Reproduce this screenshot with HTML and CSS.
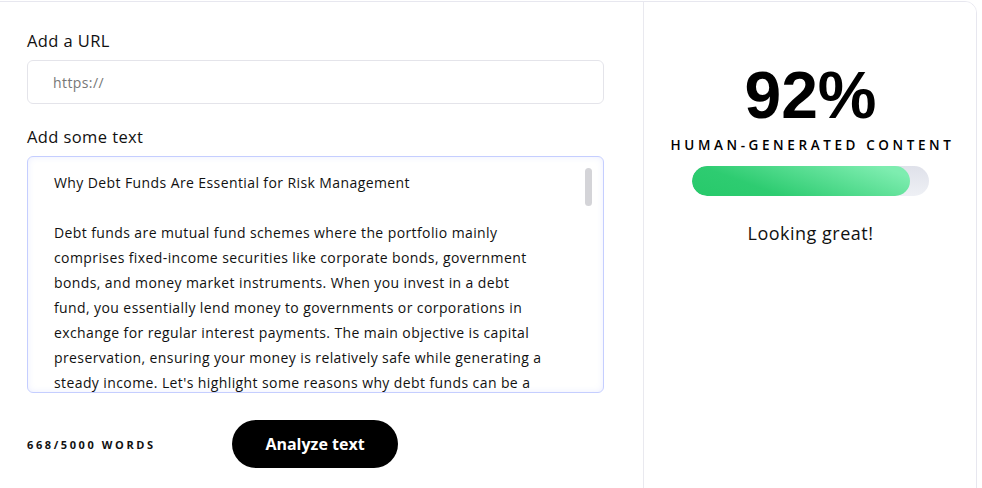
FILE: index.html
```html
<!DOCTYPE html>
<html lang="en">

<head>
	<meta charset="UTF-8" />
	<meta name="viewport" content="width=device-width, initial-scale=1.0" />
	<title>AI Content Detector</title>
	<link rel="stylesheet" href="styles.css">
</head>

<body>
	<div class="card">
		<div class="editor">
			<label class="label">Add a URL</label>
			<div class="url-box">https://</div>

			<label class="label label-text">Add some text</label>
			<div class="text-box">
				<div class="text-body">
					<p>Why Debt Funds Are Essential for Risk Management</p>
					<p>Debt funds are mutual fund schemes where the portfolio mainly<br>
						comprises fixed-income securities like corporate bonds, government<br>
						bonds, and money market instruments. When you invest in a debt<br>
						fund, you essentially lend money to governments or corporations in<br>
						exchange for regular interest payments. The main objective is capital<br>
						preservation, ensuring your money is relatively safe while generating a<br>
						steady income. Let's highlight some reasons why debt funds can be a</p>
				</div>
				<span class="thumb"></span>
			</div>

			<div class="actions">
				<span class="count">668/5000 words</span>
				<button class="analyze">Analyze text</button>
			</div>
		</div>

		<div class="result">
			<div class="score">92%</div>
			<div class="score-label">Human-generated content</div>
			<div class="bar">
				<div class="bar-fill" style="width: 92%"></div>
			</div>
			<div class="verdict">Looking great!</div>
		</div>
	</div>
</body>

</html>
```

FILE: styles.css
```css
* {
	padding: 0px;
	margin: 0px;
	box-sizing: border-box;
}

body {
	font-family: "Open Sans", "Liberation Sans", sans-serif;
	color: #111;
	background: #fff;
}

.card {
	display: grid;
	grid-template-columns: 662px 334px;
	width: 997px;
	height: 520px;
	margin: 1px 0 0 -20px;
	border: 1px solid #e7e7ef;
	border-radius: 12px;
	overflow: hidden;
}

.editor {
	padding: 27px 39px 0 46px;
	display: flex;
	flex-direction: column;
}

.label {
	font-size: 16.5px;
	font-weight: 500;
	letter-spacing: 0.4px;
	line-height: 24px;
	color: #111;
}

.label-text {
	margin-top: 21px;
}

.url-box {
	margin-top: 7px;
	height: 44px;
	border: 1px solid #e4e4ea;
	border-radius: 6px;
	padding: 0 25px;
	display: flex;
	align-items: center;
	font-size: 14px;
	letter-spacing: 0.4px;
	color: #777;
}

.text-box {
	position: relative;
	margin-top: 7px;
	height: 237px;
	border: 1px solid #c5ceff;
	border-radius: 6px;
	box-shadow: inset 0 0 6px rgba(197, 206, 255, 0.35);
	overflow: hidden;
}

.text-body {
	padding: 13px 20px 0 26px;
	font-size: 14px;
	letter-spacing: 0.4px;
	line-height: 25px;
	white-space: nowrap;
	color: #111;
}

.text-body p + p {
	margin-top: 25px;
}

.thumb {
	position: absolute;
	top: 11px;
	right: 11px;
	width: 7px;
	height: 38px;
	border-radius: 4px;
	background: #d4d4d8;
}

.actions {
	display: flex;
	align-items: center;
	margin-top: 27px;
}

.count {
	width: 205px;
	font-size: 11px;
	font-weight: 700;
	letter-spacing: 2.6px;
	text-transform: uppercase;
	color: #111;
}

.analyze {
	width: 166px;
	height: 48px;
	border: none;
	border-radius: 24px;
	background: #000;
	color: #fff;
	font-family: "Open Sans", "Liberation Sans", sans-serif;
	font-size: 16px;
	font-weight: 700;
}

.result {
	border-left: 1px solid #e9e9ef;
	background: #fff;
	display: flex;
	flex-direction: column;
	align-items: center;
	padding-top: 56px;
}

.score {
	font-family: "Liberation Sans", Arial, sans-serif;
	font-size: 66px;
	font-weight: 700;
	line-height: 74px;
	color: #000;
}

.score-label {
	margin-top: 4px;
	font-size: 13.5px;
	font-weight: 600;
	letter-spacing: 3.6px;
	text-transform: uppercase;
	color: #000;
	margin-right: -4px;
}

.bar {
	margin-top: 12px;
	width: 237px;
	height: 30px;
	border-radius: 15px;
	background: linear-gradient(180deg, #dfe1ea, #eef0f5);
	overflow: hidden;
}

.bar-fill {
	height: 100%;
	border-radius: 15px;
	background: linear-gradient(200deg, #7eedb0 10%, #2ecc71 70%, #27c96a);
}

.verdict {
	margin-top: 25px;
	font-size: 18px;
	letter-spacing: 0.5px;
	line-height: 24px;
	color: #111;
}
```
